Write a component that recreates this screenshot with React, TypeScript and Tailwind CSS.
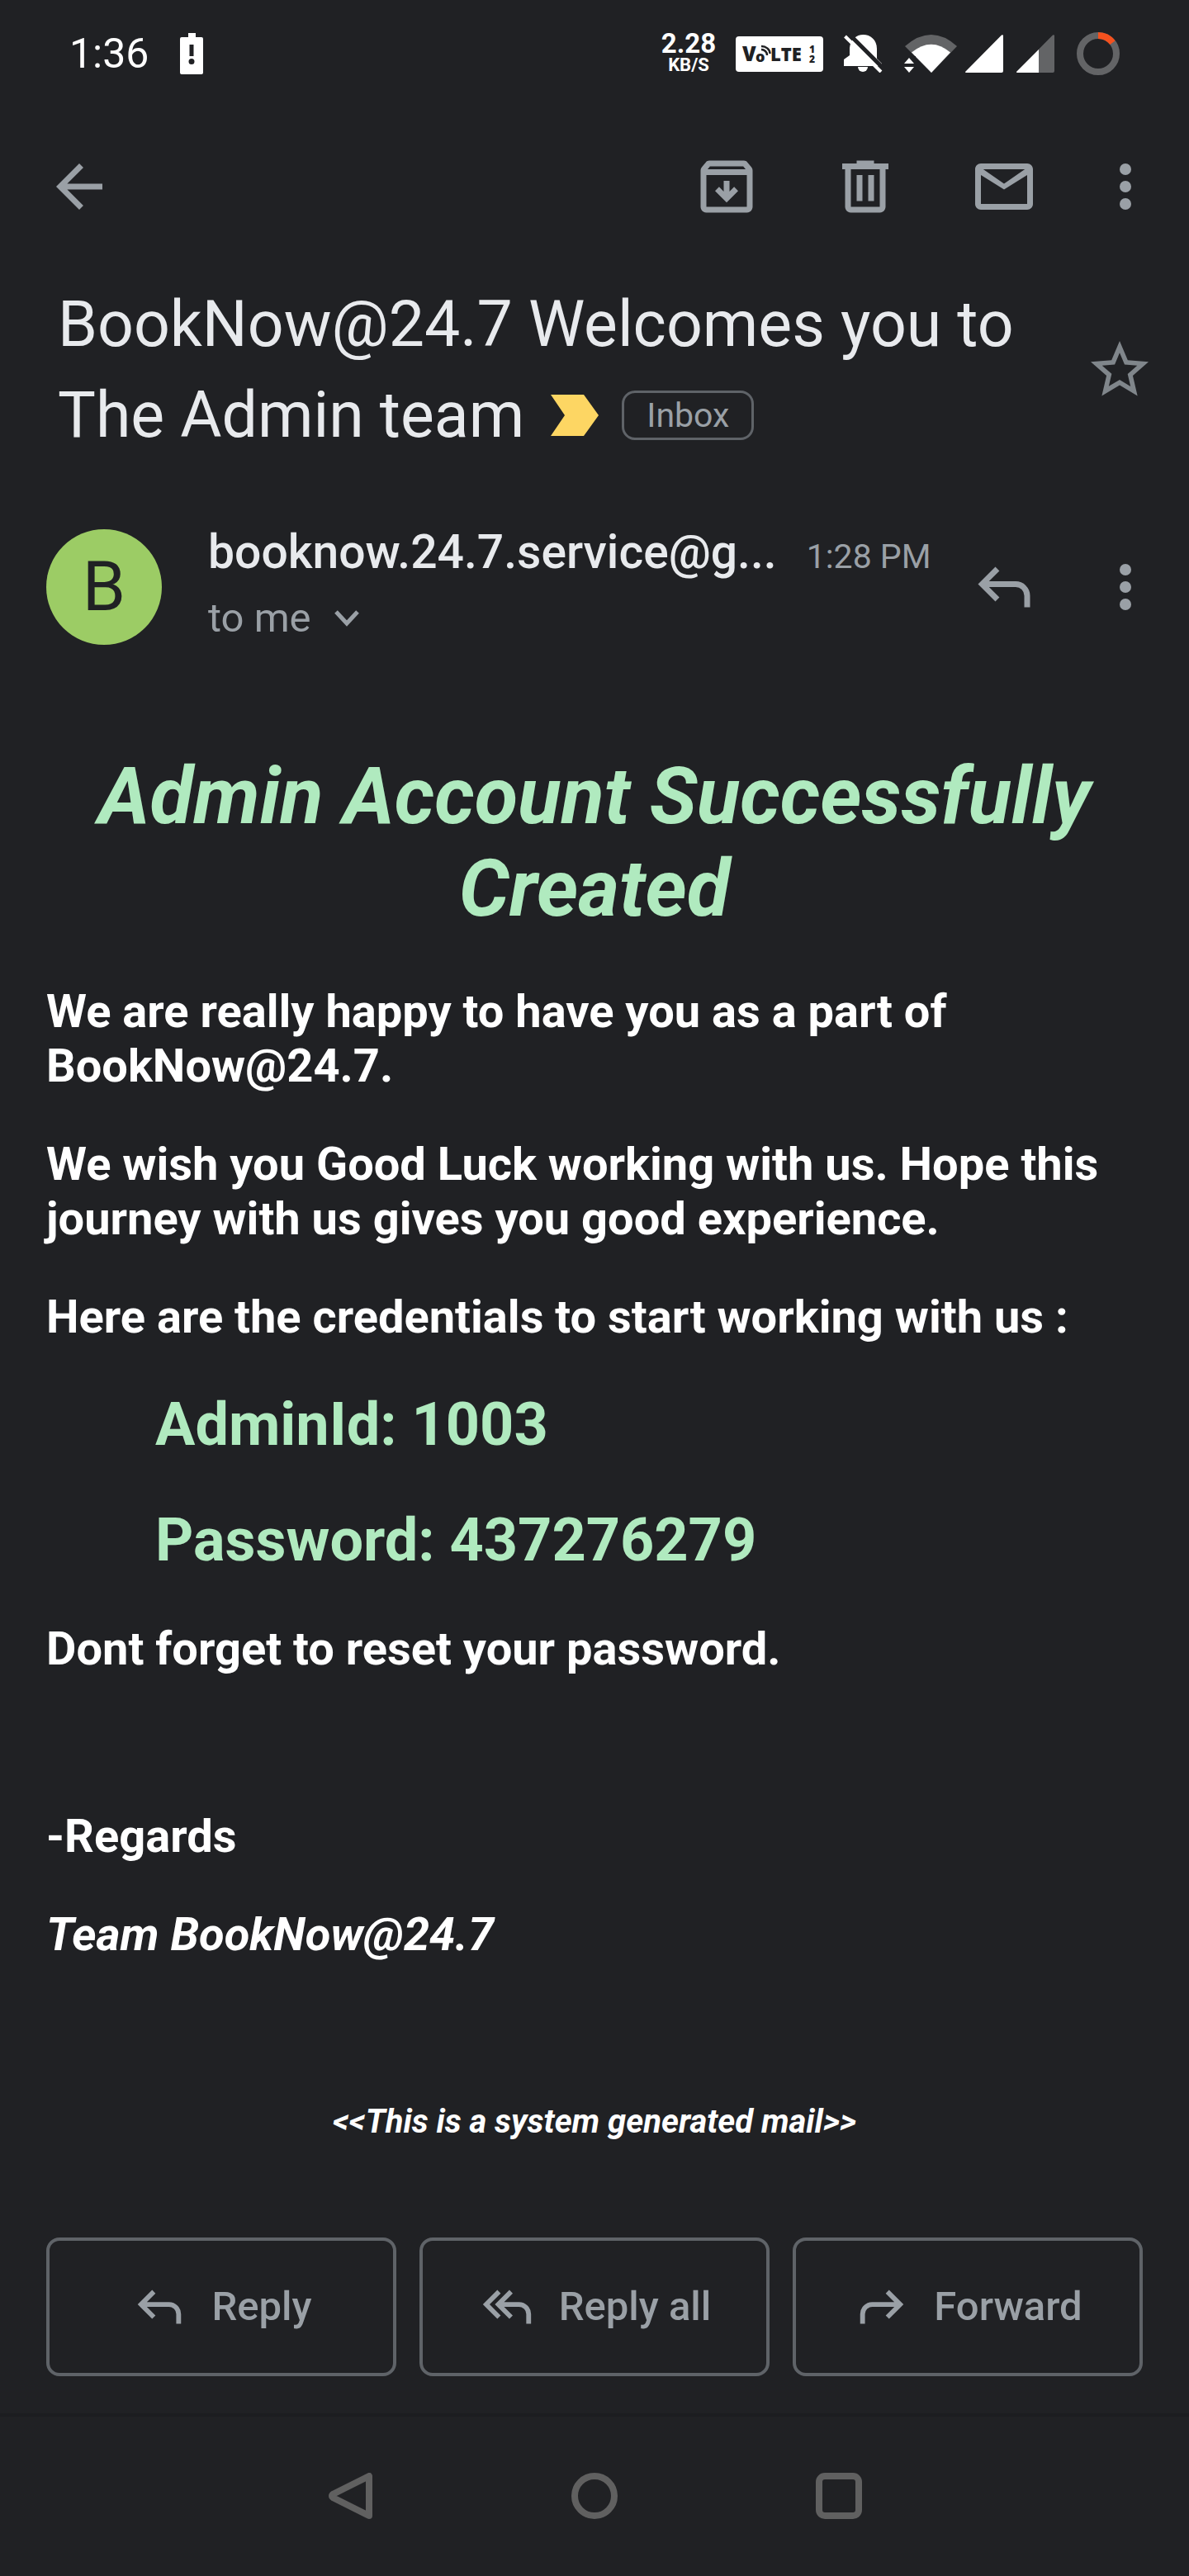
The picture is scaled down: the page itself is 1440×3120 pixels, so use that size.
import type { ReactNode } from "react";

type IconProps = { className?: string; children: ReactNode };

function Icon({ className = "size-[84px]", children }: IconProps) {
  return (
    <svg viewBox="0 0 24 24" fill="currentColor" aria-hidden="true" className={`shrink-0 ${className}`}>
      {children}
    </svg>
  );
}

const REPLY =
  "M9 5 3 11 9 17 10.4 15.6 6.8 12H16a3 3 0 0 1 3 3v4h2v-4a5 5 0 0 0-5-5H6.8L10.4 6.4z";

const MoreIcon = () => (
  <Icon>
    <circle cx="12" cy="6" r="2" />
    <circle cx="12" cy="12" r="2" />
    <circle cx="12" cy="18" r="2" />
  </Icon>
);

function StatusBar() {
  return (
    <div className="flex h-[130px] items-center pr-[84px] pl-[84px] text-white">
      <span className="text-[50px] leading-[60px]">1:36</span>
      <svg viewBox="0 0 28 50" aria-hidden="true" className="ml-[38px] h-[50px] w-7">
        <path
          fill="#fff"
          fillRule="evenodd"
          d="M10 0h9v5h7a2 2 0 0 1 2 2v41a2 2 0 0 1-2 2H2a2 2 0 0 1-2-2V7a2 2 0 0 1 2-2h8zM11.500 14h5v14h-5zM14 31a3.500 3.500 0 1 0 0 7 3.500 3.500 0 0 0 0-7z"
        />
      </svg>

      <div className="ml-auto flex items-center">
        <div className="flex w-[62px] flex-col items-center font-bold">
          <span className="text-[33px] leading-7">2.28</span>
          <span className="text-[22px] leading-6">KB/S</span>
        </div>

        <svg viewBox="0 0 106 43" className="ml-[26px] h-[43px] w-[106px]" role="img" aria-label="VoLTE 1 2">
          <rect width="106" height="43" rx="4" fill="#fff" />
          <g fill="#202124" fontFamily="Open Sans, sans-serif" fontWeight="800">
            <text x="8" y="30" fontSize="24">V</text>
            <text x="24" y="31" fontSize="18">o</text>
            <text x="42" y="30" fontSize="22">LTE</text>
            <text x="89" y="20" fontSize="12">1</text>
            <text x="89" y="32" fontSize="12">2</text>
          </g>
          <path d="M31 16c4 0 7 3 7 7M31 12c6 0 10.500 4 10.500 9" fill="none" stroke="#202124" strokeWidth="2.500" />
        </svg>

        <svg viewBox="0 0 47 46" aria-hidden="true" className="ml-[25px] h-[46px] w-[47px]">
          <g fill="#fff">
            <path d="M7 16C8 6 15 0 23.500 0S40 6 40 17v12l6 6v3H0v-8l7-5z" />
            <path d="M17 39h12a6 6 0 0 1-12 0z" />
          </g>
          <path d="M4 -3 49 42" stroke="#202124" strokeWidth="5" />
          <path d="M1.500 2 45 45" stroke="#fff" strokeWidth="4" />
        </svg>

        <svg viewBox="0 0 64 46" aria-hidden="true" className="ml-[26px] h-[46px] w-16">
          <path fill="#636466" d="M1 14Q33-14 64 14L33 46z" />
          <path fill="#fff" d="M9 21.500Q33 2 56 21.500L33 46z" />
          <path fill="#202124" d="M0 26h14v20H0z" />
          <path fill="#fff" d="M6 28 12 35H0zM6 46 12 39H0z" />
        </svg>

        <svg viewBox="0 0 46 46" aria-hidden="true" className="ml-2.5 size-[46px]">
          <path fill="#fff" d="M44 .5q2-1 2 1V44q0 2-2 2H1q-2-.5 0-2z" />
        </svg>

        <svg viewBox="0 0 46 46" aria-hidden="true" className="ml-4 size-[46px]">
          <path fill="#636466" d="M44 .5q2-1 2 1V44q0 2-2 2H1q-2-.5 0-2z" />
          <path fill="#fff" d="M27 18v28H1q-2-.5 0-2z" />
        </svg>

        <svg viewBox="0 0 52 52" aria-hidden="true" className="ml-[27px] size-[52px]" fill="none" strokeWidth="8">
          <circle cx="26" cy="26" r="22" stroke="#636466" />
          <path d="M26 4a22 22 0 0 1 17.500 8.700" stroke="#f4511e" />
        </svg>
      </div>
    </div>
  );
}

function Toolbar() {
  return (
    <div className="flex h-[192px] items-center pr-[35px] pl-[54px] text-[#9aa0a6]">
      <button type="button" aria-label="Back">
        <Icon>
          <path d="M20 11H7.830l5.590-5.590L12 4l-8 8 8 8 1.410-1.410L7.830 13H20z" />
        </Icon>
      </button>
      <div className="ml-auto flex items-center">
        <button type="button" aria-label="Archive" className="mr-[84px]">
          <Icon>
            <path
              fillRule="evenodd"
              d="M20.540 5.230 19.150 3.550C18.880 3.210 18.470 3 18 3H6c-.47 0-.88.210-1.160.55L3.460 5.230C3.170 5.570 3 6.020 3 6.500V19c0 1.100.9 2 2 2h14c1.100 0 2-.9 2-2V6.500c0-.48-.17-.93-.46-1.270zM6.240 5h11.520l.83 1H5.420zM5 19V8h14v11z"
            />
            <path d="M11 10h2v3.700l1.600-1.600L16 13.500l-4 4-4-4 1.400-1.400 1.600 1.600z" />
          </Icon>
        </button>
        <button type="button" aria-label="Delete" className="mr-[84px]">
          <Icon>
            <path
              fillRule="evenodd"
              d="M15 4V3H9v1H4v2h1v13c0 1.100.9 2 2 2h10c1.100 0 2-.9 2-2V6h1V4zM7 6h10v13H7zM9 8h2v9H9zM13 8h2v9h-2z"
            />
          </Icon>
        </button>
        <button type="button" aria-label="Mark as unread" className="mr-[63px]">
          <Icon>
            <path
              fillRule="evenodd"
              d="M20 4H4c-1.100 0-2 .9-2 2v12c0 1.100.9 2 2 2h16c1.100 0 2-.9 2-2V6c0-1.100-.9-2-2-2zM4 18V8l8 5 8-5v10zM12 11 4.800 6h14.400z"
            />
          </Icon>
        </button>
        <button type="button" aria-label="More options">
          <MoreIcon />
        </button>
      </div>
    </div>
  );
}

function Subject() {
  return (
    <div className="mt-4 flex items-center justify-between pr-[42px] pl-[70px]">
      <div className="max-w-[1200px] text-[77px] leading-[110px] text-[#e8eaed]">
        <h1 className="inline">BookNow@24.7 Welcomes you to The Admin team</h1>
        <svg
          viewBox="0 0 58 50"
          role="img"
          aria-label="Important"
          className="mb-3 ml-8 inline-block h-[50px] w-[58px] align-middle"
        >
          <path fill="#fdd663" d="M0 0h40l18 25-18 25H0l17-25z" />
        </svg>
        <span className="mb-3 ml-7 inline-block rounded-2xl border-3 border-[#5f6368] px-[27px] align-middle text-[41px] leading-[54px] text-[#9aa0a6]">
          Inbox
        </span>
      </div>
      <button type="button" aria-label="Star" className="text-[#80868b]">
        <Icon>
          <path d="M22 9.240l-7.190-.62L12 2 9.190 8.630 2 9.240l5.460 4.730L5.820 21 12 17.270 18.180 21l-1.630-7.030L22 9.240zM12 15.400l-3.760 2.270 1-4.280-3.320-2.880 4.380-.38L12 6.100l1.710 4.040 4.380.38-3.320 2.880 1 4.280L12 15.400z" />
        </Icon>
      </button>
    </div>
  );
}

function Sender() {
  return (
    <div className="mt-[73px] flex items-center pr-[35px] pl-14 text-[#9aa0a6]">
      <div className="flex size-[140px] shrink-0 items-center justify-center rounded-full bg-[#9ccc65] text-[84px] leading-none text-[#202124]">
        B
      </div>
      <div className="ml-14">
        <div className="flex items-baseline">
          <span className="text-[57px] leading-[76px] font-medium text-[#e8eaed]">booknow.24.7.service@g...</span>
          <span className="ml-9 text-[41px] leading-none">1:28 PM</span>
        </div>
        <button type="button" className="flex items-center text-[49px] leading-[84px]">
          to me
          <svg viewBox="0 0 30 20" aria-hidden="true" className="ml-7 h-5 w-[30px]">
            <path d="M2 2 15 16 28 2" fill="none" stroke="currentColor" strokeWidth="5" />
          </svg>
        </button>
      </div>
      <button type="button" aria-label="Reply" className="ml-auto">
        <Icon>
          <path d={REPLY} />
        </Icon>
      </button>
      <button type="button" aria-label="More options for message" className="ml-[63px]">
        <MoreIcon />
      </button>
    </div>
  );
}

function Message() {
  return (
    <div className="mt-[117px] px-14 text-[56px] leading-[66px] font-bold text-white">
      <h2 className="text-center text-[96px] leading-[112px] text-[#b0eabf] italic">
        Admin Account Successfully Created
      </h2>
      <p className="mt-[60px]">We are really happy to have you as a part of BookNow@24.7.</p>
      <p className="mt-[53px]">
        We wish you Good Luck working with us. Hope this journey with us gives you good experience.
      </p>
      <p className="mt-[53px]">Here are the credentials to start working with us :</p>
      <div className="my-14 flex flex-col gap-14 pl-[132px] text-[72px] leading-[84px] text-[#b0eabf]">
        <p>AdminId: 1003</p>
        <p>Password: 437276279</p>
      </div>
      <p>Dont forget to reset your password.</p>
      <p className="mt-[161px]">-Regards</p>
      <p className="mt-[53px] italic">Team BookNow@24.7</p>
      <p className="mt-[171px] text-center text-[40px] leading-[46px] italic">
        &lt;&lt;This is a system generated mail&gt;&gt;
      </p>
    </div>
  );
}

function ActionButton({ label, children }: { label: string; children: ReactNode }) {
  return (
    <button
      type="button"
      className="flex h-[168px] flex-1 items-center justify-center gap-7 rounded-2xl border-4 border-[#5f6368]"
    >
      <Icon className="size-[70px]">{children}</Icon>
      {label}
    </button>
  );
}

function Actions() {
  return (
    <div className="mt-[117px] flex gap-7 px-14 pb-[45px] text-[49px] leading-[60px] font-medium text-[#9aa0a6]">
      <ActionButton label="Reply">
        <path d={REPLY} />
      </ActionButton>
      <ActionButton label="Reply all">
        <path d="M8 5 2 11l6 6 1.400-1.400L4.800 11l4.600-4.600z" />
        <path d="M13 5 7 11l6 6 1.400-1.400-3.600-3.600H17a3 3 0 0 1 3 3v4h2v-4a5 5 0 0 0-5-5h-6.200l3.600-3.600z" />
      </ActionButton>
      <ActionButton label="Forward">
        <path d="M15 5l6 6-6 6-1.400-1.400 3.600-3.600H8a3 3 0 0 0-3 3v4H3v-4a5 5 0 0 1 5-5h9.200l-3.600-3.600z" />
      </ActionButton>
    </div>
  );
}

function NavBar() {
  return (
    <nav
      aria-label="System"
      className="flex h-[196px] items-center justify-center gap-60 border-t-4 border-[#1c1d20] text-[#606060]"
    >
      <button type="button" aria-label="System back">
        <svg viewBox="0 0 56 56" className="size-14" fill="none" stroke="currentColor" strokeWidth="8" strokeLinejoin="round">
          <path d="M51 4V52L8 30.500Q4 28 8 25.500Z" />
        </svg>
      </button>
      <button type="button" aria-label="Home">
        <svg viewBox="0 0 56 56" className="size-14" fill="none" stroke="currentColor" strokeWidth="8">
          <circle cx="28" cy="28" r="24" />
        </svg>
      </button>
      <button type="button" aria-label="Recent apps">
        <svg viewBox="0 0 56 56" className="size-14" fill="none" stroke="currentColor" strokeWidth="8">
          <rect x="4" y="4" width="48" height="48" rx="7" />
        </svg>
      </button>
    </nav>
  );
}

export default function App() {
  return (
    <div className="min-h-screen bg-[#202124] font-[Roboto,sans-serif]">
      <StatusBar />
      <Toolbar />
      <main>
        <Subject />
        <Sender />
        <Message />
        <Actions />
      </main>
      <NavBar />
    </div>
  );
}
